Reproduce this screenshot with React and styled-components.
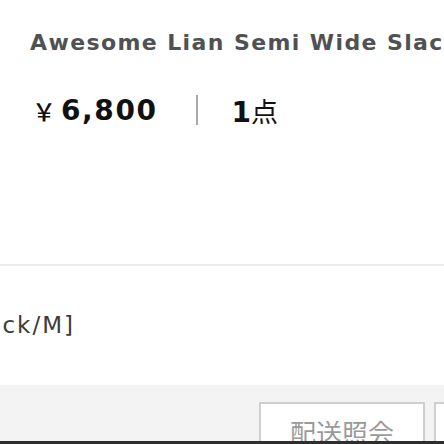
import React from 'react';
import styled, { createGlobalStyle } from 'styled-components';

const GlobalStyle = createGlobalStyle`
  html, body {
    margin: 0;
    padding: 0;
    background: #fff;
  }
  body {
    font-family: "DejaVu Sans", "Noto Sans CJK JP", sans-serif;
  }
`;

const Page = styled.div`
  width: 444px;
  height: 444px;
  overflow: hidden;
  display: flex;
  flex-direction: column;
  background: #fff;
`;

const Summary = styled.section`
  box-sizing: border-box;
  height: 266px;
  padding: 28px 0 0 30px;
  border-bottom: 2px solid #ececec;
`;

const Title = styled.h1`
  margin: 0;
  font-size: 22px;
  line-height: 30px;
  font-weight: bold;
  letter-spacing: 1.4px;
  color: #4f5152;
  white-space: nowrap;
  overflow: hidden;
`;

const PriceRow = styled.div`
  display: flex;
  align-items: center;
  margin-top: 34px;
  height: 36px;
  color: #111;
`;

const Yen = styled.span`
  font-family: "Noto Sans CJK JP", sans-serif;
  font-size: 24px;
  font-weight: 500;
  margin: 0 5px 0 2px;
`;

const Price = styled.span`
  font-size: 28px;
  font-weight: bold;
  letter-spacing: 1.6px;
`;

const Separator = styled.span`
  width: 2px;
  height: 30px;
  background: #a9a9a9;
  margin: 0 34px 0 38px;
`;

const Qty = styled.span`
  font-size: 28px;
  font-weight: bold;
  display: flex;
  align-items: baseline;
`;

const QtyUnit = styled.span`
  font-family: "Noto Sans CJK JP", sans-serif;
  font-size: 27px;
  font-weight: 400;
`;

const OptionArea = styled.section`
  flex: 1;
  padding-top: 44px;
`;

const OptionText = styled.div`
  width: 75px;
  display: flex;
  justify-content: flex-end;
  overflow: hidden;
  white-space: nowrap;
  font-size: 23px;
  letter-spacing: 2px;
  line-height: 30px;
  color: #3c3c3c;
`;

const Footer = styled.footer`
  height: 56px;
  background: #f3f3f3;
  display: flex;
  align-items: flex-start;
  gap: 9px;
  padding: 17px 0 0 259px;
  box-sizing: border-box;
  overflow: hidden;
`;

const ActionButton = styled.button`
  display: block;
  flex: none;
  width: 166px;
  box-sizing: border-box;
  border: 2px solid #cfcfcf;
  background: #fff;
  padding: 13px 0 12px;
  margin: 0;
  font-family: "Noto Sans CJK JP", sans-serif;
  font-size: 26px;
  line-height: 30px;
  color: #9a9a9a;
  text-align: center;
`;

const ScreenEdge = styled.div`
  height: 3px;
  background: #2e2e2e;
`;

export default function App() {
  return (
    <>
      <GlobalStyle />
      <Page>
        <Summary>
          <Title>Awesome Lian Semi Wide Slacks</Title>
          <PriceRow>
            <Yen>￥</Yen>
            <Price>6,800</Price>
            <Separator />
            <Qty>
              1<QtyUnit>点</QtyUnit>
            </Qty>
          </PriceRow>
        </Summary>
        <OptionArea>
          <OptionText>[Black/M]</OptionText>
        </OptionArea>
        <Footer>
          <ActionButton>配送照会</ActionButton>
          <ActionButton>返品申請</ActionButton>
        </Footer>
        <ScreenEdge />
      </Page>
    </>
  );
}
